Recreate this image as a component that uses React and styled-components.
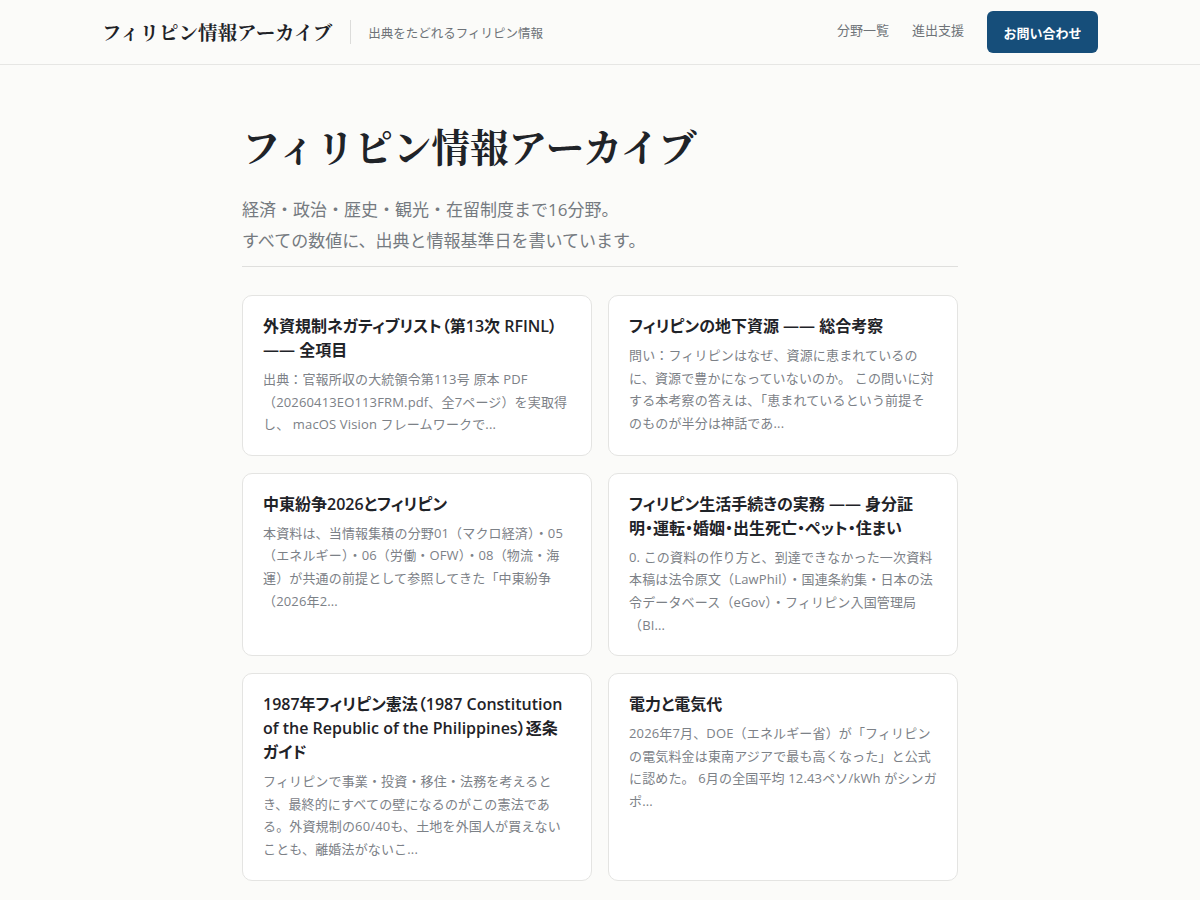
import styled, { createGlobalStyle } from 'styled-components';

const GlobalStyle = createGlobalStyle`
  * { box-sizing: border-box; }
  body {
    margin: 0;
    background: #fbfbf9;
    color: #1f2328;
    font-family: 'Open Sans', 'Noto Sans CJK JP', sans-serif;
  }
`;

const Header = styled.header`
  height: 65px;
  border-bottom: 1px solid #e6e6e4;
`;

const HeaderInner = styled.div`
  max-width: 996px;
  height: 100%;
  margin: 0 auto;
  display: flex;
  align-items: center;
  justify-content: space-between;
`;

const Brand = styled.div`
  display: flex;
  align-items: center;
`;

const Logo = styled.a`
  font-family: 'Noto Serif CJK JP', serif;
  font-size: 19.5px;
  font-weight: 700;
  color: #1f2328;
  text-decoration: none;
  padding-right: 18px;
  border-right: 1px solid #dcdcda;
  line-height: 24px;
`;

const Tagline = styled.span`
  padding-left: 17px;
  font-size: 12.5px;
  color: #6e7378;
`;

const Nav = styled.nav`
  display: flex;
  align-items: center;
  gap: 23px;
`;

const NavLink = styled.a`
  font-size: 13px;
  color: #6e7378;
  text-decoration: none;
  margin-top: -6px;
`;

const ContactButton = styled.a`
  display: flex;
  align-items: center;
  justify-content: center;
  width: 111px;
  height: 42px;
  border-radius: 6px;
  background: #164e7a;
  color: #fff;
  font-size: 13px;
  font-weight: 700;
  text-decoration: none;
`;

const Main = styled.main`
  max-width: 716px;
  margin: 0 auto;
  padding: 56px 0 24px;
`;

const Title = styled.h1`
  margin: 0;
  font-family: 'Noto Serif CJK JP', serif;
  font-size: 38.5px;
  font-weight: 700;
  line-height: 50px;
`;

const Lead = styled.p`
  margin: 23px 0 0;
  padding-bottom: 10px;
  border-bottom: 1px solid #dfdfdd;
  font-size: 17px;
  line-height: 31px;
  color: #757a80;
`;

const Grid = styled.div`
  margin-top: 28px;
  display: grid;
  grid-template-columns: 1fr 1fr;
  gap: 17px 16px;
`;

const Card = styled.a`
  display: block;
  background: #fff;
  border: 1px solid #e4e4e2;
  border-radius: 10px;
  padding: 18px 20px 19px;
  color: inherit;
  text-decoration: none;
`;

const CardTitle = styled.h2`
  margin: 0 0 6px;
  font-size: 16px;
  font-weight: 600;
  line-height: 24px;
  color: #1f2328;
  font-feature-settings: 'palt';
`;

const Excerpt = styled.p`
  margin: 0;
  font-size: 13px;
  line-height: 22.6px;
  letter-spacing: 0.15px;
  color: #7c8187;
`;

const cards = [
  {
    title: '外資規制ネガティブリスト（第13次 RFINL）—— 全項目',
    excerpt: '出典：官報所収の大統領令第113号 原本 PDF（20260413EO113FRM.pdf、全7ページ）を実取得し、 macOS Vision フレームワークで...',
  },
  {
    title: 'フィリピンの地下資源 —— 総合考察',
    excerpt: '問い：フィリピンはなぜ、資源に恵まれているのに、資源で豊かになっていないのか。 この問いに対する本考察の答えは、「恵まれているという前提そのものが半分は神話であ...',
  },
  {
    title: '中東紛争2026とフィリピン',
    excerpt: '本資料は、当情報集積の分野01（マクロ経済）・05（エネルギー）・06（労働・OFW）・08（物流・海運）が共通の前提として参照してきた「中東紛争（2026年2...',
  },
  {
    title: 'フィリピン生活手続きの実務 —— 身分証明・運転・婚姻・出生死亡・ペット・住まい',
    excerpt: '0. この資料の作り方と、到達できなかった一次資料 本稿は法令原文（LawPhil）・国連条約集・日本の法令データベース（eGov）・フィリピン入国管理局（BI...',
  },
  {
    title: '1987年フィリピン憲法（1987 Constitution of the Republic of the Philippines）逐条ガイド',
    excerpt: 'フィリピンで事業・投資・移住・法務を考えるとき、最終的にすべての壁になるのがこの憲法である。外資規制の60/40も、土地を外国人が買えないことも、離婚法がないこ...',
  },
  {
    title: '電力と電気代',
    excerpt: '2026年7月、DOE（エネルギー省）が「フィリピンの電気料金は東南アジアで最も高くなった」と公式に認めた。 6月の全国平均 12.43ペソ/kWh がシンガポ...',
  },
];

export default function App() {
  return (
    <>
      <GlobalStyle />
      <Header>
        <HeaderInner>
          <Brand>
            <Logo href="#">フィリピン情報アーカイブ</Logo>
            <Tagline>出典をたどれるフィリピン情報</Tagline>
          </Brand>
          <Nav>
            <NavLink href="#">分野一覧</NavLink>
            <NavLink href="#">進出支援</NavLink>
            <ContactButton href="#">お問い合わせ</ContactButton>
          </Nav>
        </HeaderInner>
      </Header>
      <Main>
        <Title>フィリピン情報アーカイブ</Title>
        <Lead>
          経済・政治・歴史・観光・在留制度まで16分野。
          <br />
          すべての数値に、出典と情報基準日を書いています。
        </Lead>
        <Grid>
          {cards.map(card => (
            <Card href="#" key={card.title}>
              <CardTitle>{card.title}</CardTitle>
              <Excerpt>{card.excerpt}</Excerpt>
            </Card>
          ))}
        </Grid>
      </Main>
    </>
  );
}
